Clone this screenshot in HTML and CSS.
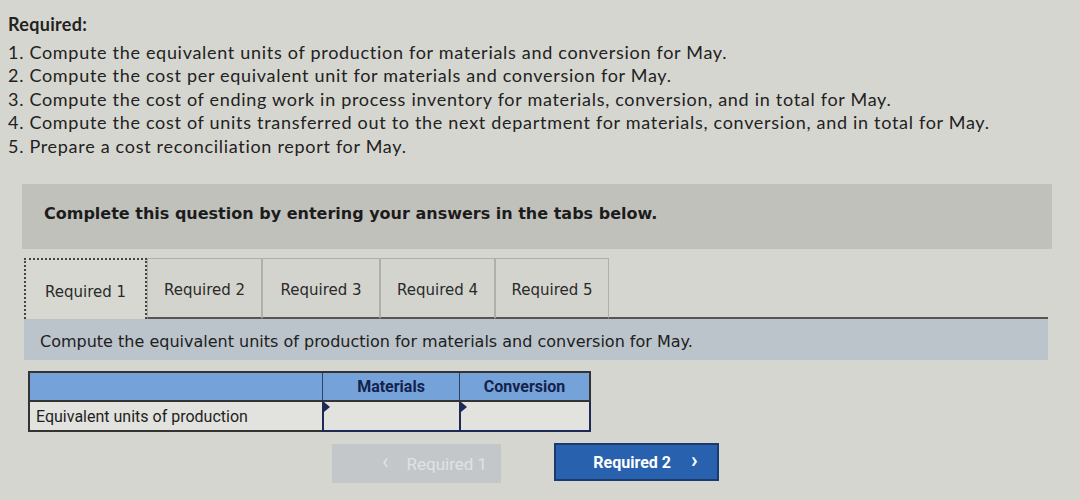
FILE: index.html
```html
<!DOCTYPE html>
<html>
<head>
<meta charset="utf-8">
<link rel="stylesheet" href="styles.css">
</head>
<body>
<div class="page">
  <div class="required">
    <div class="req-title">Required:</div>
    <div class="req-item">1. Compute the equivalent units of production for materials and conversion for May.</div>
    <div class="req-item">2. Compute the cost per equivalent unit for materials and conversion for May.</div>
    <div class="req-item">3. Compute the cost of ending work in process inventory for materials, conversion, and in total for May.</div>
    <div class="req-item">4. Compute the cost of units transferred out to the next department for materials, conversion, and in total for May.</div>
    <div class="req-item">5. Prepare a cost reconciliation report for May.</div>
  </div>

  <div class="question">
    <div class="banner">Complete this question by entering your answers in the tabs below.</div>

    <div class="tabs">
      <div class="tab tab-active">Required 1</div>
      <div class="tab tab-2">Required 2</div>
      <div class="tab tab-3">Required 3</div>
      <div class="tab tab-4">Required 4</div>
      <div class="tab tab-5">Required 5</div>
      <div class="tab-rest"></div>
    </div>

    <div class="instruction">Compute the equivalent units of production for materials and conversion for May.</div>

    <table class="grid">
      <tr class="head">
        <th class="c-label"></th>
        <th class="c-num c-mat">Materials</th>
        <th class="c-num">Conversion</th>
      </tr>
      <tr class="row">
        <td class="c-label">Equivalent units of production</td>
        <td class="c-input"><span class="marker"></span></td>
        <td class="c-input"><span class="marker"></span></td>
      </tr>
    </table>

    <div class="nav">
      <div class="btn btn-prev"><span class="chev">&lsaquo;</span> Required 1</div>
      <div class="btn btn-next">Required 2 <span class="chev">&rsaquo;</span></div>
    </div>
  </div>
</div>
</body>
</html>
```

FILE: styles.css
```css
html, body {
  margin: 0;
  padding: 0;
}
body {
  background: #d6d6d0;
  width: 1080px;
  height: 500px;
  overflow: hidden;
  font-family: Lato, "Open Sans", sans-serif;
  color: #222;
}
.page {
  padding: 13px 0 0 8px;
}
.required {
  font-size: 18px;
  line-height: 23.5px;
  letter-spacing: 0.7px;
}
.req-title {
  font-weight: bold;
  letter-spacing: 0.3px;
  margin-bottom: 4px;
}
.question {
  margin: 26px 0 0 14px;
  width: 1030px;
}
.banner {
  background: #c1c1bc;
  height: 65px;
  box-sizing: border-box;
  padding: 0 0 6px 22px;
  display: flex;
  align-items: center;
  font-family: "DejaVu Sans", Verdana, sans-serif;
  font-weight: bold;
  font-size: 16px;
  color: #1c1c1c;
}
.tabs {
  display: flex;
  margin: 9px 0 0 2px;
  height: 61px;
}
.tab {
  box-sizing: border-box;
  display: flex;
  align-items: center;
  justify-content: center;
  padding-top: 4px;
  font-family: "DejaVu Sans", Verdana, sans-serif;
  font-size: 15px;
  color: #2a2a2a;
  border: 1px solid #b0b0ab;
  border-bottom: 2px solid #555;
  background: #d4d4ce;
}
.tab-active {
  width: 123px;
  border: 2px dotted #444;
  border-bottom: none;
  background: #d8d8d2;
}
.tab-2 { width: 115px; }
.tab-3 { width: 118px; }
.tab-4 { width: 115px; }
.tab-5 { width: 114px; }
.tab-rest {
  flex: 1;
  border-bottom: 2px solid #555;
  margin-right: 4px;
}
.instruction {
  margin: 0 4px 0 2px;
  background: #bcc4cb;
  height: 41px;
  box-sizing: border-box;
  padding: 3px 0 0 16px;
  display: flex;
  align-items: center;
  font-family: "DejaVu Sans", Verdana, sans-serif;
  font-size: 16px;
  color: #202020;
}
.grid {
  margin: 11px 0 0 6px;
  width: 563px;
  table-layout: fixed;
  border-collapse: collapse;
  border: 2px solid #333;
  font-family: "Liberation Sans Narrow", Roboto, sans-serif;
  font-size: 16px;
}
.head th {
  background: #75a2d8;
  color: #14224e;
  font-weight: bold;
  height: 27px;
  padding: 0;
  border-bottom: 2px solid #333;
  border-left: 1px solid #33415f;
}
.head th.c-label { border-left: none; }
.c-label {
  width: 292px;
  text-align: left;
}
.c-mat {
  width: 136px;
}
.c-num {
  text-align: center;
}
.row td {
  height: 28px;
  padding: 0;
  background: #e2e2de;
}
.row td.c-label {
  padding-left: 6px;
  color: #1e1e1e;
  border-right: 1px solid #888;
}
.c-input {
  position: relative;
  border: 2px solid #1d2a55;
}
.marker {
  position: absolute;
  left: 0;
  top: 0;
  width: 0;
  height: 0;
  border-top: 5px solid transparent;
  border-bottom: 5px solid transparent;
  border-left: 6px solid #1d2a55;
}
.nav {
  display: flex;
  align-items: center;
  margin: 9px 0 0 310px;
  gap: 53px;
}
.btn {
  box-sizing: border-box;
  display: flex;
  align-items: center;
  justify-content: center;
  font-family: "Liberation Sans Narrow", Roboto, sans-serif;
  font-size: 16px;
  font-weight: bold;
}
.btn-prev {
  width: 169px;
  height: 39px;
  margin-top: 3px;
  padding-left: 36px;
  background: #c4c7ca;
  color: #dfe2e5;
  font-size: 17px;
  font-weight: normal;
}
.btn-next {
  width: 165px;
  height: 38px;
  padding-left: 18px;
  background: #2862ae;
  border: 2px solid #1a3a70;
  color: #fff;
}
.chev {
  font-size: 22px;
  line-height: 1;
  position: relative;
  top: -2px;
}
.btn-next .chev { margin-left: 20px; }
.btn-prev .chev { margin-right: 18px; }
```
